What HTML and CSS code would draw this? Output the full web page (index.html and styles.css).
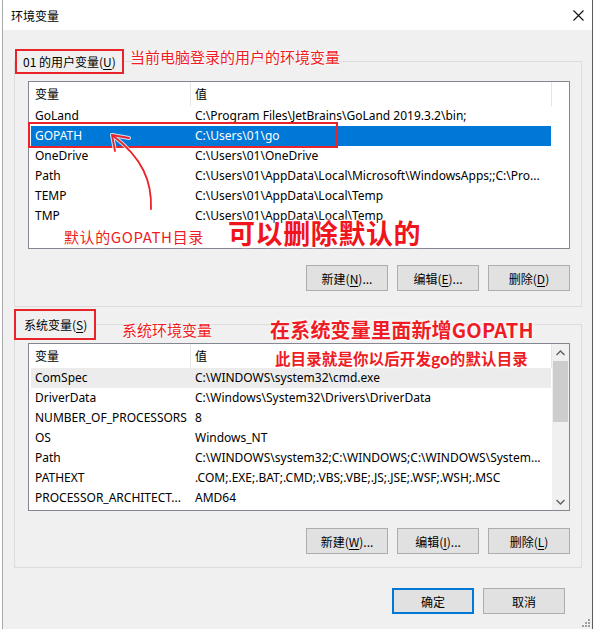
FILE: index.html
```html
<!DOCTYPE html>
<html lang="zh-CN">
<head>
<meta charset="utf-8">
<title>环境变量</title>
<link rel="stylesheet" href="styles.css">
</head>
<body>
<div class="dialog">
  <div class="titlebar">
    <span class="title">环境变量</span>
    <svg class="close" width="11" height="11" viewBox="0 0 11 11"><path d="M0.5 0.5 L10.5 10.5 M10.5 0.5 L0.5 10.5" stroke="#111" stroke-width="1.1" fill="none"/></svg>
  </div>
  <div class="content">
    <fieldset class="group group-user">
      <legend class="legend legend-user">01 的用户变量(<u>U</u>)</legend>
      <div class="list">
        <div class="list-main">
          <div class="header"><span class="hcell hname">变量</span><span class="hcell hvalue">值</span></div>
          <div class="row"><span class="cell name">GoLand</span><span class="cell value">C:\Program Files\JetBrains\GoLand 2019.3.2\bin;</span></div>
          <div class="row selected"><span class="cell name">GOPATH</span><span class="cell value">C:\Users\01\go</span></div>
          <div class="row"><span class="cell name">OneDrive</span><span class="cell value">C:\Users\01\OneDrive</span></div>
          <div class="row"><span class="cell name">Path</span><span class="cell value">C:\Users\01\AppData\Local\Microsoft\WindowsApps;;C:\Pro...</span></div>
          <div class="row"><span class="cell name">TEMP</span><span class="cell value">C:\Users\01\AppData\Local\Temp</span></div>
          <div class="row"><span class="cell name">TMP</span><span class="cell value">C:\Users\01\AppData\Local\Temp</span></div>
        </div>
      </div>
      <div class="buttons buttons-user">
        <button class="btn">新建(<u>N</u>)...</button>
        <button class="btn">编辑(<u>E</u>)...</button>
        <button class="btn">删除(<u>D</u>)</button>
      </div>
    </fieldset>

    <fieldset class="group group-sys">
      <legend class="legend legend-sys">系统变量(<u>S</u>)</legend>
      <div class="list">
        <div class="list-main">
          <div class="header"><span class="hcell hname">变量</span><span class="hcell hvalue">值</span></div>
          <div class="row hover"><span class="cell name">ComSpec</span><span class="cell value">C:\WINDOWS\system32\cmd.exe</span></div>
          <div class="row"><span class="cell name">DriverData</span><span class="cell value">C:\Windows\System32\Drivers\DriverData</span></div>
          <div class="row"><span class="cell name">NUMBER_OF_PROCESSORS</span><span class="cell value">8</span></div>
          <div class="row"><span class="cell name">OS</span><span class="cell value">Windows_NT</span></div>
          <div class="row"><span class="cell name">Path</span><span class="cell value">C:\WINDOWS\system32;C:\WINDOWS;C:\WINDOWS\System...</span></div>
          <div class="row"><span class="cell name">PATHEXT</span><span class="cell value">.COM;.EXE;.BAT;.CMD;.VBS;.VBE;.JS;.JSE;.WSF;.WSH;.MSC</span></div>
          <div class="row"><span class="cell name">PROCESSOR_ARCHITECT...</span><span class="cell value">AMD64</span></div>
        </div>
        <div class="scrollbar">
          <div class="sb-btn"><svg width="9" height="6" viewBox="0 0 9 6"><path d="M0.5 5 L4.5 1 L8.5 5" stroke="#606060" stroke-width="1.4" fill="none"/></svg></div>
          <div class="sb-thumb"></div>
          <div class="sb-track"></div>
          <div class="sb-btn"><svg width="9" height="6" viewBox="0 0 9 6"><path d="M0.5 1 L4.5 5 L8.5 1" stroke="#606060" stroke-width="1.4" fill="none"/></svg></div>
        </div>
      </div>
      <div class="buttons buttons-sys">
        <button class="btn">新建(<u>W</u>)...</button>
        <button class="btn">编辑(<u>I</u>)...</button>
        <button class="btn">删除(<u>L</u>)</button>
      </div>
    </fieldset>

    <div class="footer">
      <button class="btn btn-default">确定</button>
      <button class="btn">取消</button>
    </div>
  </div>

  <div class="ann ann-user">当前电脑登录的用户的环境变量</div>
  <div class="mark-box mark-gopath"></div>
  <svg class="arrow" width="596" height="629" viewBox="0 0 596 629">
    <g fill="none" stroke="#fff" stroke-width="4" stroke-linecap="round" opacity="0.8">
      <path d="M151 209 C152 182 143 158 112 135"/>
      <path d="M112 135 L129 138 M112 135 L115 151"/>
    </g>
    <g fill="none" stroke="#e8232a" stroke-width="1.8" stroke-linecap="round">
      <path d="M151 209 C152 182 143 158 112 135"/>
      <path d="M112 135 L129 138 M112 135 L115 151"/>
    </g>
  </svg>
  <div class="ann ann-default">默认的GOPATH目录</div>
  <div class="ann ann-delete">可以删除默认的</div>
  <div class="ann ann-sys">系统环境变量</div>
  <div class="ann ann-new">在系统变量里面新增GOPATH</div>
  <div class="ann ann-dir">此目录就是你以后开发go的默认目录</div>
  <svg class="grip" width="9" height="9" viewBox="0 0 9 9">
    <g fill="#a0a0a0"><rect x="6" y="0" width="2" height="2"/><rect x="3" y="3" width="2" height="2"/><rect x="6" y="3" width="2" height="2"/><rect x="0" y="6" width="2" height="2"/><rect x="3" y="6" width="2" height="2"/><rect x="6" y="6" width="2" height="2"/></g>
  </svg>
</div>
</body>
</html>
```

FILE: styles.css
```css
html {
  background: #ffffff;
}

body {
  margin: 0;
  font-family: "Noto Sans", "Noto Sans CJK SC", sans-serif;
  font-size: 12px;
  color: #000;
}

.dialog {
  position: relative;
  margin-left: 2px;
  width: 589px;
  height: 629px;
  background: #f0f0f0;
  border-left: 1px solid #a8a8a8;
  border-right: 1px solid #5c5c5c;
  overflow: hidden;
}

.titlebar {
  height: 30px;
  background: #ffffff;
  display: flex;
  align-items: center;
  padding-left: 8px;
  padding-right: 8px;
}

.title {
  font-family: "Noto Sans CJK SC", sans-serif;
  font-size: 12px;
  color: #000;
}

.close {
  margin-left: auto;
  display: block;
}

.content {
  padding: 19px 0 0 11px;
}

.group {
  box-sizing: border-box;
  width: 568px;
  margin: 0;
  border: 1px solid #dcdcdc;
  min-width: 0;
}

.group-user {
  padding: 7px 11px 15px 13px;
}

.group-sys {
  margin-top: 2px;
  padding: 3px 11px 13px 13px;
}

.legend {
  font-family: "Noto Sans CJK SC", sans-serif;
  border: 2px solid #e8232a;
  color: #000;
}

.legend-user {
  margin-left: -13px;
  padding: 0 6px 0 6px;
  line-height: 21px;
}

.legend-sys {
  margin-left: -14px;
  padding: 0 7px 0 8px;
  line-height: 27px;
}

u {
  text-decoration: underline;
  text-underline-offset: 2px;
}

.list {
  box-sizing: border-box;
  width: 542px;
  height: 168px;
  background: #ffffff;
  border: 1px solid #828790;
  display: flex;
}

.list-main {
  width: 523px;
}

.header {
  display: flex;
  height: 24px;
  line-height: 24px;
}

.hcell {
  box-sizing: border-box;
  border-right: 1px solid #e5e5e5;
  font-family: "Noto Sans CJK SC", sans-serif;
}

.hname {
  width: 162px;
  padding-left: 6px;
}

.hvalue {
  width: 361px;
  padding-left: 4px;
}

.row {
  display: flex;
  margin-left: 2px;
  width: 520px;
  height: 20px;
  line-height: 20px;
  white-space: nowrap;
}

.row.selected {
  background: #0078d7;
  color: #ffffff;
}

.row.hover {
  background: #ececec;
}

.cell {
  box-sizing: border-box;
  overflow: hidden;
}

.name {
  width: 159px;
  padding-left: 4px;
}

.value {
  flex: 1;
  padding-left: 5px;
}

.scrollbar {
  width: 17px;
  background: #f0f0f0;
  display: flex;
  flex-direction: column;
}

.sb-btn {
  height: 17px;
  display: flex;
  align-items: center;
  justify-content: center;
}

.sb-thumb {
  height: 61px;
  margin: 0 1px;
  background: #cdcdcd;
}

.sb-track {
  flex: 1;
}

.buttons {
  display: flex;
  justify-content: flex-end;
  gap: 9px;
}

.buttons-user {
  margin-top: 16px;
}

.buttons-sys {
  margin-top: 17px;
}

.btn {
  box-sizing: border-box;
  width: 82px;
  height: 26px;
  padding: 0;
  background: #e1e1e1;
  border: 1px solid #adadad;
  font-family: "Noto Sans CJK SC", sans-serif;
  font-size: 12px;
  color: #000;
}

.btn-default {
  border-color: #0078d7;
  box-shadow: inset 0 0 0 1px #0078d7;
}

.footer {
  display: flex;
  justify-content: flex-end;
  gap: 9px;
  margin-top: 20px;
  padding-right: 27px;
}

.ann {
  position: absolute;
  font-family: "Noto Sans CJK SC", sans-serif;
  color: #ee1d25;
  white-space: nowrap;
  text-shadow: 0 0 2px #fff, 0 0 3px #fff, 0 0 4px #fff;
}

.ann-user {
  left: 127px;
  top: 47px;
  font-size: 15px;
  line-height: 20px;
}

.ann-default {
  left: 61px;
  top: 227px;
  font-size: 15px;
  line-height: 20px;
  letter-spacing: 0.6px;
}

.ann-delete {
  left: 225px;
  top: 218px;
  font-size: 27px;
  line-height: 30px;
  font-weight: 700;
  letter-spacing: 0.6px;
  color: #f0141c;
}

.ann-sys {
  left: 119px;
  top: 320px;
  font-size: 15px;
  line-height: 20px;
}

.ann-new {
  left: 267px;
  top: 317px;
  font-size: 20px;
  line-height: 26px;
  font-weight: 700;
  letter-spacing: 0.2px;
}

.ann-dir {
  left: 272px;
  top: 348px;
  font-size: 15.5px;
  line-height: 20px;
  font-weight: 700;
  letter-spacing: 0.1px;
}

.mark-box {
  position: absolute;
  box-sizing: border-box;
  border: 2px solid #e8232a;
}

.mark-gopath {
  left: 25px;
  top: 122px;
  width: 310px;
  height: 26px;
}

.arrow {
  position: absolute;
  left: -3px;
  top: 0;
  pointer-events: none;
}

.grip {
  position: absolute;
  right: 1px;
  bottom: 1px;
}
```
